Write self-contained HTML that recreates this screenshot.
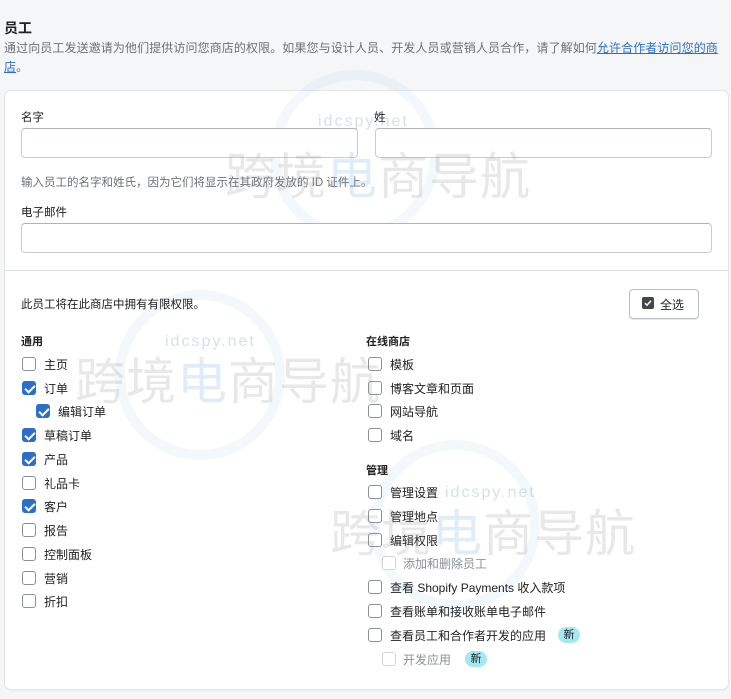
<!DOCTYPE html>
<html><head><meta charset="utf-8"><style>
*{box-sizing:border-box;margin:0;padding:0}
body{width:731px;height:699px;background:#f5f6f8;font-family:"Liberation Sans","Noto Sans CJK SC",sans-serif;color:#202223;position:relative;overflow:hidden;font-size:12px}
.a{position:absolute;white-space:nowrap}
.card{position:absolute;left:5px;top:91px;width:723px;height:598px;background:#fff;border-radius:6px;box-shadow:0 0 0 1px #e3e5e7,0 1px 2px rgba(0,0,0,.1)}
.inp{position:absolute;height:30px;border:1px solid #c9cccf;border-top-color:#aeb4b9;border-radius:4px;background:#fff}
.cb{position:absolute;width:14px;height:14px;border:1.5px solid #8c9196;border-radius:3px;background:#fff}
.cb.on{background:#2c6ecb;border-color:#2c6ecb}
.cb.on:after{content:"";position:absolute;left:3.5px;top:0.5px;width:4px;height:8px;border:solid #fff;border-width:0 2px 2px 0;transform:rotate(45deg)}
.cb.dis{border-color:#d2d5d8}
.l{position:absolute;font-size:12px;white-space:nowrap}
.dim{color:#8c9196}
.h{font-weight:bold;font-size:11px}
.new{position:absolute;width:22px;height:16px;border-radius:8px;background:#a4e8f2;font-size:11px;text-align:center;line-height:16px}
.wm{position:absolute;font-size:50px;color:rgba(150,150,150,.22);white-space:nowrap;letter-spacing:1px}
.wm span{color:rgba(100,160,220,.2)}
.ring{position:absolute;border:10px solid rgba(140,190,240,.1);border-radius:50%}
</style></head><body>
<div class="a" style="left:4px;top:18px;font-size:14px;font-weight:bold">员工</div>
<div class="a" style="left:4px;top:39px;font-size:12px;color:#6d7175;line-height:19px;white-space:normal;width:716px;letter-spacing:0.1px">通过向员工发送邀请为他们提供访问您商店的权限。如果您与设计人员、开发人员或营销人员合作，请了解如何<span style="color:#2c6ecb;text-decoration:underline">允许合作者访问您的商店</span>。</div>
<div class="card"></div>
<div class="ring" style="left:270px;top:70px;width:170px;height:170px"></div>
<div class="ring" style="left:115px;top:290px;width:170px;height:170px"></div>
<div class="ring" style="left:370px;top:440px;width:170px;height:170px"></div>
<div class="l" style="left:21px;top:109px;font-size:11.5px">名字</div>
<div class="l" style="left:374px;top:109px;font-size:11.5px">姓</div>
<div class="inp" style="left:21px;top:128px;width:337px"></div>
<div class="inp" style="left:375px;top:128px;width:337px"></div>
<div class="l" style="left:21px;top:174px;color:#6d7175;font-size:11.5px">输入员工的名字和姓氏，因为它们将显示在其政府发放的 ID 证件上。</div>
<div class="l" style="left:21px;top:204px;font-size:11.5px">电子邮件</div>
<div class="inp" style="left:21px;top:223px;width:691px"></div>
<div class="a" style="left:5px;top:270px;width:723px;height:1px;background:#e1e3e5"></div>
<div class="l" style="left:21px;top:296px;font-size:11.5px">此员工将在此商店中拥有有限权限。</div>
<div class="a" style="left:629px;top:289px;width:70px;height:30px;border:1px solid #babfc3;border-radius:4px;box-shadow:0 1px 0 rgba(0,0,0,.08)"></div>
<svg class="a" style="left:642px;top:297px" width="12" height="12" viewBox="0 0 12 12"><rect width="12" height="12" rx="2" fill="#44474a"/><path d="M3 6.2l2 2 4-4.4" stroke="#fff" stroke-width="1.5" fill="none"/></svg>
<div class="l" style="left:660px;top:296px">全选</div>
<div class="l h" style="left:21px;top:333px">通用</div>
<div class="l h" style="left:366px;top:333px">在线商店</div>
<div class="l h" style="left:366px;top:462px">管理</div>

<div class="cb" style="left:22px;top:357px"></div><div class="l" style="left:44px;top:356px">主页</div>
<div class="cb on" style="left:22px;top:381px"></div><div class="l" style="left:44px;top:380px">订单</div>
<div class="cb on" style="left:36px;top:404px"></div><div class="l" style="left:58px;top:403px">编辑订单</div>
<div class="cb on" style="left:22px;top:428px"></div><div class="l" style="left:44px;top:427px">草稿订单</div>
<div class="cb on" style="left:22px;top:452px"></div><div class="l" style="left:44px;top:451px">产品</div>
<div class="cb" style="left:22px;top:476px"></div><div class="l" style="left:44px;top:475px">礼品卡</div>
<div class="cb on" style="left:22px;top:499px"></div><div class="l" style="left:44px;top:498px">客户</div>
<div class="cb" style="left:22px;top:523px"></div><div class="l" style="left:44px;top:522px">报告</div>
<div class="cb" style="left:22px;top:547px"></div><div class="l" style="left:44px;top:546px">控制面板</div>
<div class="cb" style="left:22px;top:571px"></div><div class="l" style="left:44px;top:570px">营销</div>
<div class="cb" style="left:22px;top:594px"></div><div class="l" style="left:44px;top:593px">折扣</div>

<div class="cb" style="left:368px;top:357px"></div><div class="l" style="left:390px;top:356px">模板</div>
<div class="cb" style="left:368px;top:381px"></div><div class="l" style="left:390px;top:380px">博客文章和页面</div>
<div class="cb" style="left:368px;top:404px"></div><div class="l" style="left:390px;top:403px">网站导航</div>
<div class="cb" style="left:368px;top:428px"></div><div class="l" style="left:390px;top:427px">域名</div>
<div class="cb" style="left:368px;top:485px"></div><div class="l" style="left:390px;top:484px">管理设置</div>
<div class="cb" style="left:368px;top:509px"></div><div class="l" style="left:390px;top:508px">管理地点</div>
<div class="cb" style="left:368px;top:533px"></div><div class="l" style="left:390px;top:532px">编辑权限</div>
<div class="cb dis" style="left:382px;top:556px"></div><div class="l dim" style="left:403px;top:555px">添加和删除员工</div>
<div class="cb" style="left:368px;top:580px"></div><div class="l" style="left:390px;top:579px">查看 Shopify Payments 收入款项</div>
<div class="cb" style="left:368px;top:604px"></div><div class="l" style="left:390px;top:603px">查看账单和接收账单电子邮件</div>
<div class="cb" style="left:368px;top:628px"></div><div class="l" style="left:390px;top:627px">查看员工和合作者开发的应用</div>
<div class="new" style="left:558px;top:627px">新</div>
<div class="cb dis" style="left:382px;top:652px"></div><div class="l dim" style="left:403px;top:651px">开发应用</div>
<div class="new" style="left:465px;top:651px">新</div>

<div class="wm" style="left:225px;top:137px">跨境<span>电</span>商导航</div>
<div class="wm" style="left:75px;top:342px">跨境<span>电</span>商导航</div>
<div class="wm" style="left:330px;top:494px">跨境<span>电</span>商导航</div>
<div class="a" style="left:318px;top:113px;font-size:16px;color:rgba(120,150,200,.3);letter-spacing:2px">idcspy.net</div>
<div class="a" style="left:165px;top:333px;font-size:16px;color:rgba(120,150,200,.3);letter-spacing:2px">idcspy.net</div>
<div class="a" style="left:445px;top:484px;font-size:16px;color:rgba(120,150,200,.3);letter-spacing:2px">idcspy.net</div>
</body></html>
